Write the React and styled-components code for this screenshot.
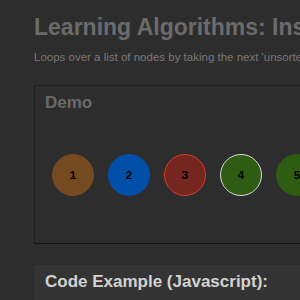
import React from 'react'
import styled, { createGlobalStyle } from 'styled-components'

const GlobalStyle = createGlobalStyle`
  html, body {
    margin: 0;
    padding: 0;
    background: #2d2d2d;
    overflow: hidden;
  }
  body {
    font-family: "Liberation Sans", Arial, Helvetica, sans-serif;
  }
`

const Page = styled.div`
  width: 900px;
  padding: 14px 0 0 34px;
`

const Title = styled.h1`
  margin: 0;
  font-size: 23px;
  line-height: 26px;
  font-weight: 700;
  color: #6b6b6b;
  white-space: nowrap;
`

const Subtitle = styled.p`
  margin: 11px 0 0;
  font-size: 11.5px;
  line-height: 13px;
  color: #7a7a7a;
  white-space: nowrap;
`

const DemoBox = styled.section`
  margin-top: 21px;
  height: 159px;
  border: 1px solid #1f1f1f;
  border-bottom-color: #111;
  padding: 7px 10px 0;
  box-sizing: border-box;
`

const SectionTitle = styled.h2`
  margin: 0;
  font-size: 17px;
  line-height: 20px;
  font-weight: 700;
  color: ${p => (p.$light ? '#d2d2d2' : '#6b6b6b')};
`

const NodeRow = styled.div`
  display: flex;
  gap: 14px;
  margin-top: 41px;
  padding-left: 7px;
`

const Node = styled.div`
  width: 42px;
  height: 42px;
  box-sizing: border-box;
  border-radius: 50%;
  border: 1px solid ${p => p.$ring || p.$color};
  background: ${p => p.$color};
  display: flex;
  align-items: center;
  justify-content: center;
  font-size: 11.5px;
  font-weight: 700;
  color: #000;
  flex-shrink: 0;
`

const CodeSection = styled.section`
  margin-top: 21px;
  background: #343434;
  padding: 7px 11px 10px;
`

const nodes = [
  { n: 1, color: '#754a20' },
  { n: 2, color: '#0050aa' },
  { n: 3, color: '#74261f', ring: '#d2402e' },
  { n: 4, color: '#2e5c12', ring: '#d8d8d8' },
  { n: 5, color: '#2e5c12' },
  { n: 6, color: '#2e5c12' },
]

export default function App() {
  return (
    <Page>
      <GlobalStyle />
      <Title>Learning Algorithms: Insertion Sort</Title>
      <Subtitle>
        Loops over a list of nodes by taking the next 'unsorted' node and inserting it into its correct place.
      </Subtitle>
      <DemoBox>
        <SectionTitle>Demo</SectionTitle>
        <NodeRow>
          {nodes.map(node => (
            <Node key={node.n} $color={node.color} $ring={node.ring}>
              {node.n}
            </Node>
          ))}
        </NodeRow>
      </DemoBox>
      <CodeSection>
        <SectionTitle $light>Code Example (Javascript):</SectionTitle>
      </CodeSection>
    </Page>
  )
}
